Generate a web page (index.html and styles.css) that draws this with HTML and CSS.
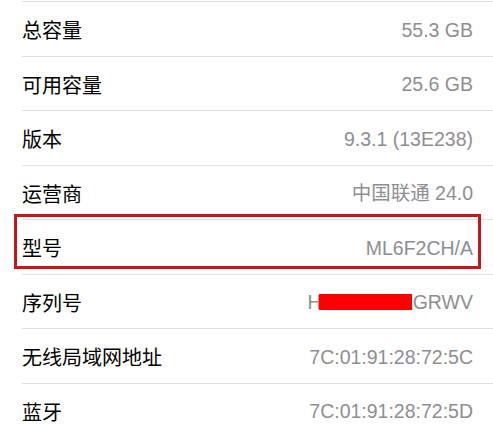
FILE: index.html
```html
<!DOCTYPE html>
<html lang="zh-CN">
<head>
<meta charset="utf-8">
<link rel="stylesheet" href="styles.css">
</head>
<body>
<div class="list">
  <div class="row"><span class="label">总容量</span><span class="value">55.3 GB</span></div>
  <div class="row"><span class="label">可用容量</span><span class="value">25.6 GB</span></div>
  <div class="row"><span class="label">版本</span><span class="value">9.3.1 (13E238)</span></div>
  <div class="row"><span class="label">运营商</span><span class="value">中国联通 24.0</span></div>
  <div class="row highlighted"><span class="label">型号</span><span class="value">ML6F2CH/A</span><span class="mark"></span></div>
  <div class="row"><span class="label">序列号</span><span class="value serial">HXXXXXXKGRWV<span class="redact"></span></span></div>
  <div class="row last"><span class="label">无线局域网地址</span><span class="value">7C:01:91:28:72:5C</span></div>
  <div class="row last"><span class="label">蓝牙</span><span class="value">7C:01:91:28:72:5D</span></div>
</div>
</body>
</html>
```
FILE: styles.css
```css
html, body {
  margin: 0;
  padding: 0;
  background: #ffffff;
}
body {
  font-family: "Liberation Sans", "Noto Sans CJK SC", sans-serif;
  width: 493px;
  height: 440px;
  overflow: hidden;
}
.list {
  padding-top: 1px;
  padding-left: 22px;
}
.row {
  position: relative;
  box-sizing: border-box;
  height: 54.5px;
  border-top: 1px solid #e2e2e2;
  padding: 3px 20px 0 0;
  display: flex;
  align-items: center;
  justify-content: space-between;
  font-size: 19.5px;
}
.label {
  color: #000000;
  font-family: "Noto Sans CJK SC", sans-serif;
  font-size: 20px;
  line-height: 1;
}
.value {
  color: #8e8e93;
  line-height: 1;
  position: relative;
}
.mark {
  position: absolute;
  left: -8px;
  top: -6.5px;
  width: 467px;
  height: 55px;
  box-sizing: border-box;
  border: 3px solid #c8161d;
}
.redact {
  position: absolute;
  right: 61px;
  top: 1px;
  width: 93px;
  height: 16px;
  background: #ff0000;
}
```
